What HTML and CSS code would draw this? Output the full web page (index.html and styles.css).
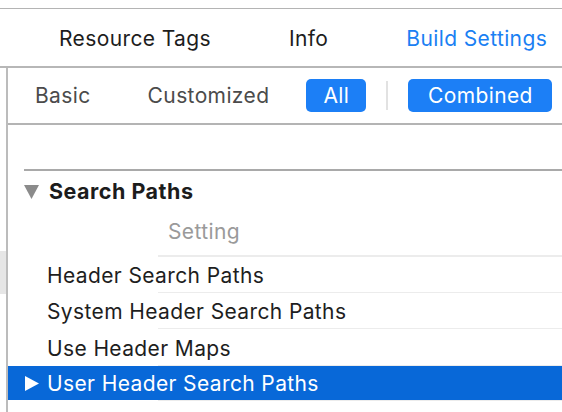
FILE: index.html
```html
<!DOCTYPE html>
<html>
<head>
<meta charset="utf-8">
<link rel="stylesheet" href="styles.css">
</head>
<body>
<div class="window">
  <div class="topgap"></div>
  <nav class="tabs">
    <span class="tab">Resource Tags</span>
    <span class="tab">Info</span>
    <span class="tab active">Build Settings</span>
  </nav>
  <div class="body">
    <div class="sidebar"><div class="side-sel"></div></div>
    <div class="main">
      <div class="filters">
        <span class="filter f-basic">Basic</span>
        <span class="filter f-custom">Customized</span>
        <span class="pill pill-all">All</span>
        <span class="divider"></span>
        <span class="pill pill-combined">Combined</span>
      </div>
      <div class="content">
        <div class="section">
          <div class="section-head">
            <svg class="disc" width="15" height="14" viewBox="0 0 15 14"><polygon points="0,0 15,0 7.5,14" fill="#8b8b8b"/></svg>
            <span class="section-title">Search Paths</span>
          </div>
        </div>
        <div class="colhead"><span class="colname">Setting</span></div>
        <div class="row"><span class="rowlabel">Header Search Paths</span></div>
        <div class="row"><span class="rowlabel">System Header Search Paths</span></div>
        <div class="row row-tall"><span class="rowlabel">Use Header Maps</span></div>
        <div class="row selected">
          <svg class="disc-r" width="14" height="15" viewBox="0 0 14 15"><polygon points="0,0 14,7.5 0,15" fill="#ffffff"/></svg>
          <span class="rowlabel">User Header Search Paths</span>
        </div>
      </div>
    </div>
  </div>
</div>
</body>
</html>
```

FILE: styles.css
```css
html, body {
  margin: 0;
  padding: 0;
  background: #ffffff;
}
body {
  width: 562px;
  height: 412px;
  overflow: hidden;
  font-family: "Inter", "Liberation Sans", sans-serif;
  font-size: 21px;
  letter-spacing: 0.38px;
}
.window {
  display: flex;
  flex-direction: column;
  height: 412px;
}
.topgap {
  height: 8px;
  border-bottom: 1px solid #b4b4b4;
}
.tabs {
  display: flex;
  align-items: center;
  height: 55px;
  padding-left: 59px;
  padding-top: 2px;
  gap: 78px;
  border-bottom: 2px solid #b7b7b7;
  color: #1d1d1d;
  white-space: nowrap;
}
.tab.active {
  color: #1a80f3;
}
.body {
  display: flex;
  flex: 1;
}
.sidebar {
  width: 6px;
  border-right: 2px solid #bcbcbc;
  padding-top: 183px;
}
.side-sel {
  height: 43px;
  background: #e6e6e6;
}
.main {
  flex: 1;
  display: flex;
  flex-direction: column;
  min-width: 0;
}
.filters {
  display: flex;
  align-items: center;
  height: 55px;
  border-bottom: 2px solid #b4b4b4;
  color: #4b4b4b;
  white-space: nowrap;
}
.f-basic { margin-left: 27px; }
.f-custom { margin-left: 57px; }
.pill {
  display: flex;
  align-items: center;
  justify-content: center;
  height: 33px;
  border-radius: 5px;
  background: #1c7ff6;
  color: #ffffff;
}
.pill-all {
  margin-left: 37px;
  width: 60px;
}
.divider {
  width: 2px;
  height: 29px;
  margin-left: 20px;
  background: #e2e2e2;
}
.pill-combined {
  margin-left: 20px;
  width: 144px;
}
.content {
  padding-top: 44px;
  display: flex;
  flex-direction: column;
}
.section {
  margin-left: 16px;
  border-top: 2px solid #a9a9a9;
}
.section-head {
  display: flex;
  align-items: center;
  height: 40px;
}
.disc {
  margin-top: 1px;
}
.section-title {
  margin-left: 10px;
  font-size: 21.5px;
  letter-spacing: 0.5px;
  font-weight: 700;
  color: #1c1c1c;
}
.colhead {
  height: 46px;
  display: flex;
  align-items: center;
  padding-left: 160px;
  background: linear-gradient(#ececec, #ececec) no-repeat right bottom / calc(100% - 150px) 2px;
}
.colname {
  color: #9a9a9a;
  margin-top: -5px;
}
.row {
  height: 36px;
  display: flex;
  align-items: center;
  padding-left: 39px;
  color: #1e1e1e;
  white-space: nowrap;
  background: linear-gradient(#ececec, #ececec) no-repeat right bottom / calc(100% - 150px) 1px;
}
.row-tall {
  height: 37px;
}
.rowlabel {
  margin-top: 1px;
}
.row.selected {
  height: 35px;
  padding-left: 17px;
  background:
    linear-gradient(#ececec, #ececec) no-repeat right bottom / calc(100% - 150px) 1px,
    linear-gradient(#0868d8, #0868d8) no-repeat left top / 100% 34px;
  color: #ffffff;
}
.row.selected .rowlabel {
  margin-top: 0;
}
.disc-r {
  margin-right: 8px;
  margin-top: 0;
}
```
